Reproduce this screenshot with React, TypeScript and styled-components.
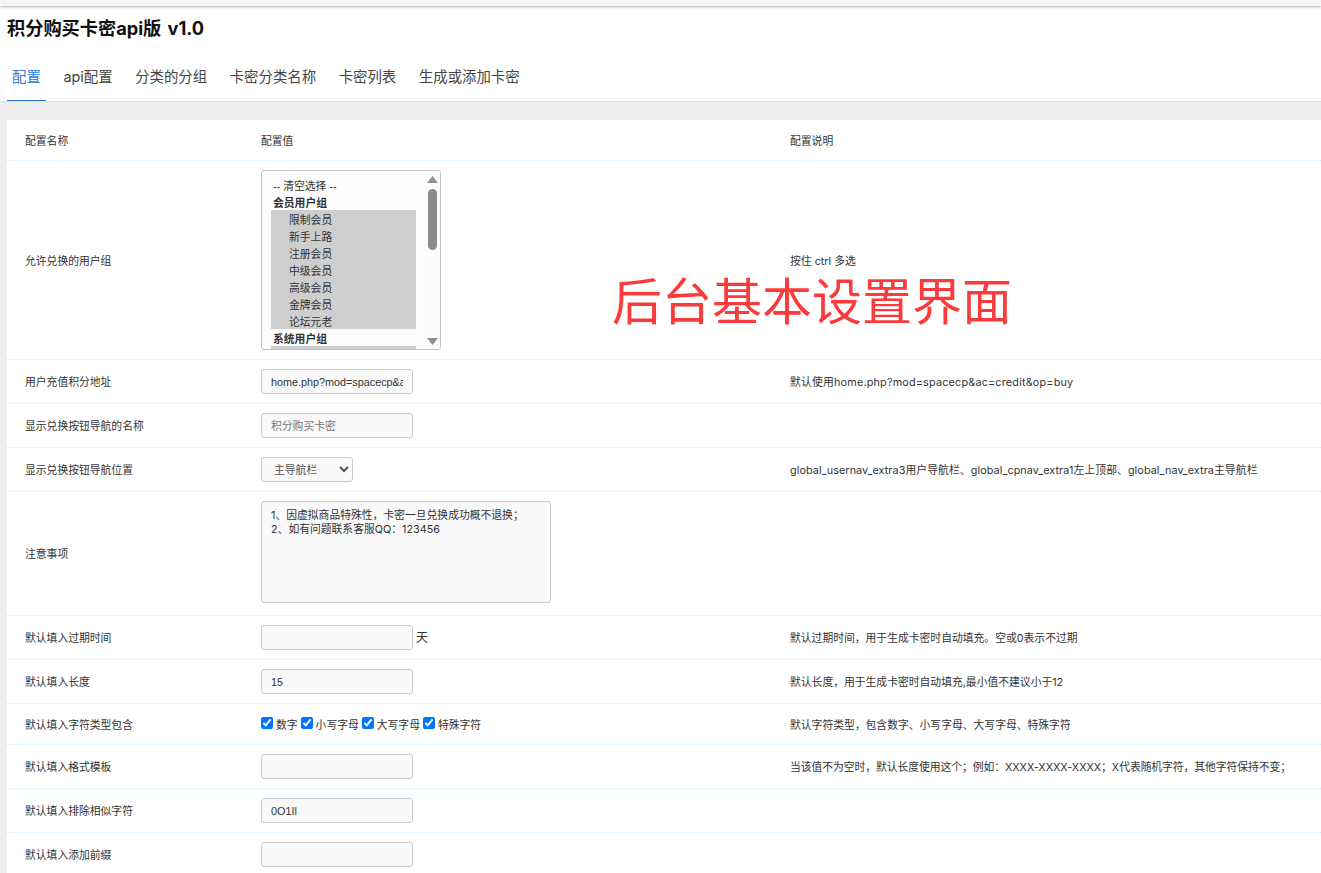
import React from 'react';
import styled, { createGlobalStyle } from 'styled-components';

const GlobalStyle = createGlobalStyle`
  html, body {
    margin: 0;
    height: 100%;
    overflow: hidden;
    background: #fff;
  }
  body {
    font-family: Inter, "Noto Sans CJK SC", sans-serif;
    font-size: 10.8px;
    color: #333;
  }
`;

const Page = styled.div`
  position: relative;
  background: #efefef;
  min-height: 873px;
`;

const TopStrip = styled.div`
  height: 6px;
  background: #f6f6f6;
  box-shadow: 0 1px 3px rgba(0, 0, 0, 0.3);
  position: relative;
`;

const Header = styled.header`
  background: #fff;
  height: 95px;
  padding: 0 7px;
  border-bottom: 1px solid #dddddd;
  box-sizing: content-box;
`;

const Title = styled.h1`
  margin: 0;
  padding-top: 10px;
  height: 35px;
  font-size: 18.2px;
  line-height: 24px;
  font-weight: 700;
  word-spacing: 2px;
  color: #111;
`;

const Tabs = styled.nav`
  display: flex;
  height: 50px;
`;

const Tab = styled.a<{ $active?: boolean }>`
  padding: 0 5px;
  margin-right: 12.6px;
  font-size: 14.4px;
  line-height: 51px;
  color: ${(p) => (p.$active ? '#2f7dd8' : '#444')};
  border-bottom: 1px solid ${(p) => (p.$active ? '#2f7dd8' : 'transparent')};
  height: 50px;
  box-sizing: border-box;
`;

const Card = styled.main`
  margin: 18px 0 0 7px;
  background: #fff;
`;

const Row = styled.div`
  display: grid;
  grid-template-columns: 254px 529px 1fr;
  align-items: center;
  padding: 9px 0;
  border-bottom: 1px dotted #d6eaf8;
`;

const HeadRow = styled(Row)`
  min-height: 22px;
`;

const Name = styled.div`
  padding: 0 0 1px 18px;
`;

const Value = styled.div`
  display: flex;
  align-items: center;
`;

const Desc = styled.div<{ $tracking?: number }>`
  padding-bottom: 1px;
  white-space: nowrap;
  letter-spacing: ${(p) => p.$tracking ?? 0}px;
`;

const TextInput = styled.input`
  width: 152px;
  height: 25px;
  box-sizing: border-box;
  padding: 0 9px;
  border: 1px solid #ccc;
  border-radius: 3px;
  background: #f9f9f9;
  color: #333;
  font: 10.8px "Liberation Sans", "Noto Sans CJK SC", sans-serif;
  outline: none;

  &::placeholder {
    color: #777;
  }
`;

const Unit = styled.span`
  font-size: 12px;
  margin: 0 0 3px 3px;
`;

const NavSelect = styled.select`
  width: 92px;
  height: 25px;
  box-sizing: border-box;
  padding: 0 8px;
  border: 1px solid #ccc;
  border-radius: 3px;
  background-color: #f9f9f9;
  color: #555;
  font: 10.8px "Liberation Sans", "Noto Sans CJK SC", sans-serif;
`;

const Notes = styled.textarea`
  display: block;
  width: 290px;
  height: 102px;
  box-sizing: border-box;
  margin-bottom: 3px;
  padding: 7px 9px 5px;
  border: 1px solid #ccc;
  border-radius: 3px;
  background: #f9f9f9;
  color: #333;
  font: 10.8px/14px Inter, "Noto Sans CJK SC", sans-serif;
  resize: none;
  outline: none;
`;

const Checks = styled.div`
  display: flex;
  align-items: center;
  height: 22px;
  gap: 3px;
`;

const CheckLabel = styled.label`
  display: flex;
  align-items: center;
  gap: 3px;
`;

const CheckBox = styled.input`
  width: 12px;
  height: 12px;
  margin: 0 0 3px;
`;

const ListBox = styled.div`
  display: flex;
  width: 180px;
  height: 180px;
  box-sizing: border-box;
  border: 1px solid #c4c4c4;
  border-radius: 3px;
  background: #fdfdfd;
  overflow: hidden;
`;

const ListItems = styled.div`
  flex: 1;
  padding: 5px 9px 0;
  overflow: hidden;
  font-family: "Liberation Sans", "Noto Sans CJK SC", sans-serif;
`;

const ListItem = styled.div<{ $group?: boolean; $selected?: boolean; $indent?: boolean }>`
  height: 17px;
  line-height: 20px;
  padding-left: ${(p) => (p.$indent ? '18px' : '2px')};
  font-weight: ${(p) => (p.$group ? 700 : 400)};
  background: ${(p) => (p.$selected ? '#cecece' : 'transparent')};
  white-space: nowrap;
`;

const ScrollTrack = styled.div`
  width: 15px;
  display: flex;
  flex-direction: column;
  align-items: center;
  padding: 5px 0 4px;
  box-sizing: border-box;
  background: #fcfcfc;
`;

const ScrollThumb = styled.div`
  width: 9px;
  height: 61px;
  margin: 6px 0 auto;
  border-radius: 4.5px;
  background: #8b8b8b;
`;

const Watermark = styled.div`
  position: absolute;
  left: 612px;
  top: 270px;
  font-family: "Noto Sans CJK SC", sans-serif;
  font-size: 50px;
  line-height: 56px;
  color: #fb3b3b;
  white-space: nowrap;
`;

const Arrow = ({ down }: { down?: boolean }) => (
  <svg width="11" height="7" viewBox="0 0 11 7">
    <path d={down ? 'M0 0H11L5.5 7Z' : 'M5.5 0L11 7H0Z'} fill="#8f8f8f" />
  </svg>
);

const tabs = ['配置', 'api配置', '分类的分组', '卡密分类名称', '卡密列表', '生成或添加卡密'];
const members = ['限制会员', '新手上路', '注册会员', '中级会员', '高级会员', '金牌会员', '论坛元老'];
const charTypes = ['数字', '小写字母', '大写字母', '特殊字符'];

const App = () => {
  return (
    <Page>
      <GlobalStyle />
      <TopStrip />
      <Header>
        <Title>积分购买卡密api版 v1.0</Title>
        <Tabs>
          {tabs.map((t, i) => (
            <Tab key={t} $active={i === 0}>
              {t}
            </Tab>
          ))}
        </Tabs>
      </Header>
      <Card>
        <HeadRow>
          <Name>配置名称</Name>
          <Value>配置值</Value>
          <Desc>配置说明</Desc>
        </HeadRow>
        <Row>
          <Name>允许兑换的用户组</Name>
          <Value>
            <ListBox>
              <ListItems>
                <ListItem>-- 清空选择 --</ListItem>
                <ListItem $group>会员用户组</ListItem>
                {members.map((m) => (
                  <ListItem key={m} $indent $selected>
                    {m}
                  </ListItem>
                ))}
                <ListItem $group>系统用户组</ListItem>
                <ListItem $indent $selected />
              </ListItems>
              <ScrollTrack>
                <Arrow />
                <ScrollThumb />
                <Arrow down />
              </ScrollTrack>
            </ListBox>
          </Value>
          <Desc>按住 ctrl 多选</Desc>
        </Row>
        <Row>
          <Name>用户充值积分地址</Name>
          <Value>
            <TextInput defaultValue="home.php?mod=spacecp&ac=credit&op=buy" />
          </Value>
          <Desc $tracking={0.2}>默认使用home.php?mod=spacecp&amp;ac=credit&amp;op=buy</Desc>
        </Row>
        <Row>
          <Name>显示兑换按钮导航的名称</Name>
          <Value>
            <TextInput placeholder="积分购买卡密" />
          </Value>
          <Desc />
        </Row>
        <Row>
          <Name>显示兑换按钮导航位置</Name>
          <Value>
            <NavSelect defaultValue="nav">
              <option value="nav">主导航栏</option>
            </NavSelect>
          </Value>
          <Desc $tracking={0.09}>global_usernav_extra3用户导航栏、global_cpnav_extra1左上顶部、global_nav_extra主导航栏</Desc>
        </Row>
        <Row>
          <Name>注意事项</Name>
          <Value>
            <Notes defaultValue={'1、因虚拟商品特殊性，卡密一旦兑换成功概不退换；\n2、如有问题联系客服QQ：123456'} />
          </Value>
          <Desc />
        </Row>
        <Row>
          <Name>默认填入过期时间</Name>
          <Value>
            <TextInput />
            <Unit>天</Unit>
          </Value>
          <Desc>默认过期时间，用于生成卡密时自动填充。空或0表示不过期</Desc>
        </Row>
        <Row>
          <Name>默认填入长度</Name>
          <Value>
            <TextInput defaultValue="15" />
          </Value>
          <Desc>默认长度，用于生成卡密时自动填充,最小值不建议小于12</Desc>
        </Row>
        <Row>
          <Name>默认填入字符类型包含</Name>
          <Value>
            <Checks>
              {charTypes.map((c) => (
                <CheckLabel key={c}>
                  <CheckBox type="checkbox" defaultChecked />
                  {c}
                </CheckLabel>
              ))}
            </Checks>
          </Value>
          <Desc>默认字符类型，包含数字、小写字母、大写字母、特殊字符</Desc>
        </Row>
        <Row>
          <Name>默认填入格式模板</Name>
          <Value>
            <TextInput />
          </Value>
          <Desc $tracking={-0.05}>当该值不为空时，默认长度使用这个；例如：XXXX-XXXX-XXXX；X代表随机字符，其他字符保持不变；</Desc>
        </Row>
        <Row>
          <Name>默认填入排除相似字符</Name>
          <Value>
            <TextInput defaultValue="0O1Il" />
          </Value>
          <Desc />
        </Row>
        <Row>
          <Name>默认填入添加前缀</Name>
          <Value>
            <TextInput />
          </Value>
          <Desc />
        </Row>
      </Card>
      <Watermark>后台基本设置界面</Watermark>
    </Page>
  );
};

export default App;
